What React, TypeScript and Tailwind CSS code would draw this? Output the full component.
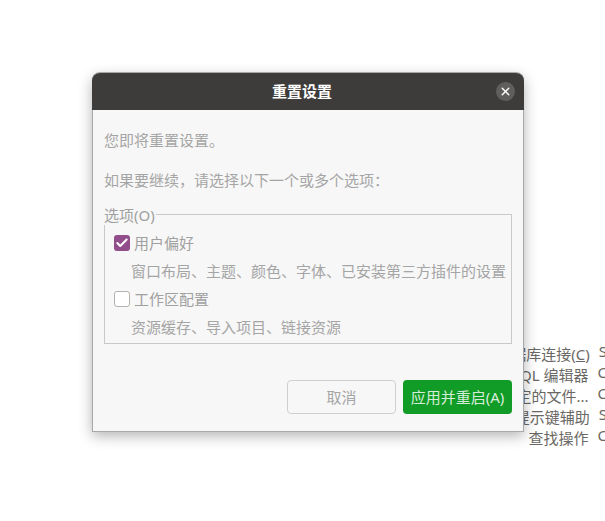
import React from 'react';
import { X, Check } from 'lucide-react';

const fontStack = { fontFamily: '"Noto Sans", "Noto Sans CJK SC", sans-serif' };

const backgroundRows = [
  { label: <>据库连接(<span className="underline">C</span>)</>, key: 'S' },
  { label: 'SQL 编辑器', key: 'C' },
  { label: '指定的文件...', key: 'C' },
  { label: '提示键辅助', key: 'S' },
  { label: '查找操作', key: 'C' },
];

const Option: React.FC<{ label: string; hint: string; checked?: boolean }> = ({ label, hint, checked }) => (
  <div>
    <div className="flex items-center h-[28px]">
      {checked ? (
        <span className="w-4 h-4 rounded-[3px] bg-[#924d8b] flex items-center justify-center">
          <Check size={14} strokeWidth={3.5} className="text-white" />
        </span>
      ) : (
        <span className="w-4 h-4 rounded-[3px] bg-white border border-[#b5b2ae]" />
      )}
      <span className="ml-[4px] text-[#a0a0a0]">{label}</span>
    </div>
    <div className="h-[28px] leading-[28px] pl-[17px] text-[#a5a5a5] whitespace-nowrap">{hint}</div>
  </div>
);

export default function App() {
  return (
    <div className="relative w-[605px] h-[521px] bg-white overflow-hidden text-[15px]" style={fontStack}>
      {/* rows of the window behind the dialog */}
      <div className="absolute left-[462px] top-[344px] w-[145px] flex flex-col">
        {backgroundRows.map((row, i) => (
          <div key={i} className="flex h-[21px] leading-[21px]">
            <span className="w-[130px] flex justify-end text-[#6a6864] whitespace-nowrap">{row.label}</span>
            <span className="ml-[9px] -mt-[3px] text-[#6a6864]">{row.key}</span>
          </div>
        ))}
      </div>

      <div className="absolute left-[92px] top-[73px] w-[432px] h-[359px] flex flex-col bg-[#f7f7f7] rounded-t-[8px] border-x border-b border-[#a8a8a8] shadow-[0_-1px_0_#a8a8a8,0_4px_14px_rgba(0,0,0,0.3)]">
        <div className="relative -mx-px h-[37px] shrink-0 bg-[#3d3c3a] rounded-t-[8px] flex items-center justify-center">
          <span className="text-white font-bold pr-[12px]">重置设置</span>
          <button className="absolute right-[9px] top-[9px] w-[19px] h-[19px] rounded-full bg-[#5f5e5c] flex items-center justify-center">
            <X size={13} strokeWidth={2.5} className="text-white" />
          </button>
        </div>

        <div className="flex-1 flex flex-col px-[11px]">
          <p className="mt-[20px] h-[20px] leading-[20px] text-[#a5a5a5]">您即将重置设置。</p>
          <p className="mt-[20px] h-[20px] leading-[20px] text-[#a5a5a5]">如果要继续，请选择以下一个或多个选项：</p>

          <div className="relative mt-[24px] h-[130px] border border-[#c9c9c9] px-[9px] pt-[14px]">
            <span className="absolute left-[-1px] top-[-10px] bg-[#f7f7f7] pr-px leading-[20px] text-[#a0a0a0]">选项(O)</span>
            <Option checked label="用户偏好" hint="窗口布局、主题、颜色、字体、已安装第三方插件的设置" />
            <Option label="工作区配置" hint="资源缓存、导入项目、链接资源" />
          </div>

          <div className="mt-[36px] flex justify-end gap-[7px]">
            <button className="w-[109px] h-[34px] rounded-[4px] border border-[#cfcfcf] bg-[#f7f7f7] text-[#a5a5a5]">取消</button>
            <button className="w-[109px] h-[34px] rounded-[4px] bg-[#119c27] text-[#d6ecd8] whitespace-nowrap">应用并重启(A)</button>
          </div>
        </div>
      </div>
    </div>
  );
}
